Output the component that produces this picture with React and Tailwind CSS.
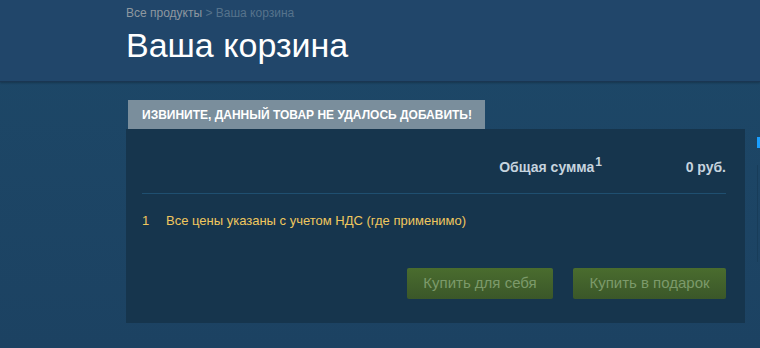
export default function App() {
    const font = { fontFamily: '"Liberation Sans", Arial, sans-serif' }

    return (
        <div style={font} className="w-[760px] h-[348px] overflow-hidden bg-gradient-to-b from-[#1d4868] to-[#1c4262]">
            {/* page head */}
            <div className="h-[82px] bg-[#21466a] border-b border-[#1a3652] shadow-[0_1px_2px_rgba(0,0,0,0.25)] pl-[126px] pt-[5px]">
                <div className="text-[12px] leading-[16px] text-[#8f98a0]">
                    Все продукты <span className="text-[#56738c]">&gt; Ваша корзина</span>
                </div>
                <h1 className="mt-[4px] text-[34px] leading-[40px] text-white">Ваша корзина</h1>
            </div>

            <div className="flex pl-[126px] pt-[18px] gap-[12px]">
                <div className="w-[619px]">
                    <div className="ml-[2px] w-[357px] h-[29px] bg-[#7a8e9c] flex items-center pl-[14px] text-[12px] font-bold uppercase text-white">
                        Извините, данный товар не удалось добавить!
                    </div>

                    <div className="h-[194px] bg-[#16354d] pl-[16px] pr-[19px] flex flex-col">
                        <div className="h-[65px] border-b border-[#1f4f70] flex items-center justify-end pt-[12px] text-[14px] font-bold text-[#c6d4df]">
                            <div>
                                Общая сумма<sup className="text-[12px] ml-[1px]">1</sup>
                            </div>
                            <div className="w-[124px] text-right">0 руб.</div>
                        </div>

                        <div className="flex mt-[17px] text-[13px] text-[#f0c75e]">
                            <span className="w-[24px]">1</span>
                            <span>Все цены указаны с учетом НДС (где применимо)</span>
                        </div>

                        <div className="mt-auto mb-[24px] flex justify-end gap-[20px]">
                            <button className="w-[146px] h-[31px] rounded-[2px] bg-gradient-to-b from-[#4a6c2e] to-[#3a5729] text-[15px] text-[#7c9a6a]">
                                Купить для себя
                            </button>
                            <button className="w-[153px] h-[31px] rounded-[2px] bg-gradient-to-b from-[#4a6c2e] to-[#3a5729] text-[15px] text-[#7c9a6a]">
                                Купить в подарок
                            </button>
                        </div>
                    </div>
                </div>

                <div className="flex-1 pt-[37px]">
                    <div className="w-[3px] h-[11px] bg-[#1a9fff]" />
                    <div className="mt-[17px] h-[97px] border-l border-[#183d5a]" />
                </div>
            </div>
        </div>
    )
}
